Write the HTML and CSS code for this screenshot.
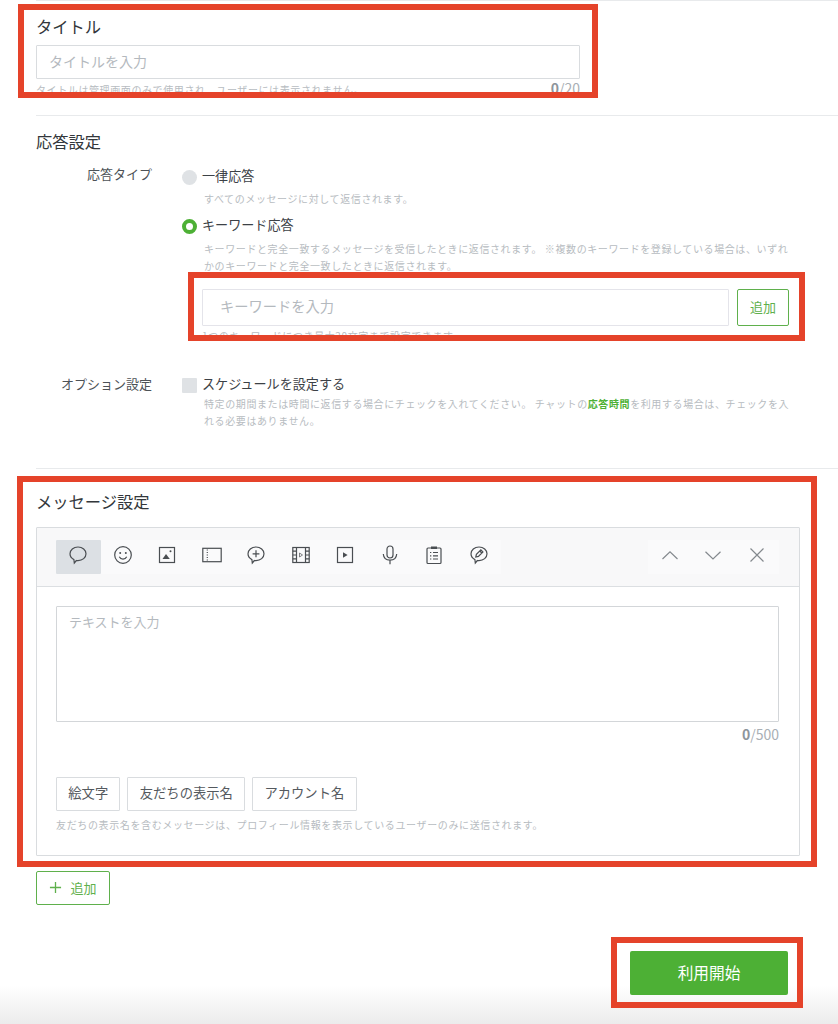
FILE: index.html
```html
<!DOCTYPE html>
<html lang="ja">
<head>
<meta charset="utf-8">
<title>応答設定</title>
<link rel="stylesheet" href="styles.css">
</head>
<body>
<div class="page">
  <section class="section section-title">
    <h2 class="heading">タイトル</h2>
    <div class="field title-field">タイトルを入力</div>
    <div class="meta-row title-meta">
      <span class="hint">タイトルは管理画面のみで使用され、ユーザーには表示されません。</span>
      <span class="count count-large"><b>0</b>/20</span>
    </div>
  </section>

  <section class="section section-response">
    <h2 class="heading">応答設定</h2>
    <div class="form-row type-row">
      <div class="form-label">応答タイプ</div>
      <div class="form-body">
        <div class="option"><span class="radio"></span>一律応答</div>
        <p class="hint option-hint first-hint">すべてのメッセージに対して返信されます。</p>
        <div class="option option-second"><span class="radio radio-on"></span>キーワード応答</div>
        <p class="hint option-hint second-hint">キーワードと完全一致するメッセージを受信したときに返信されます。 ※複数のキーワードを登録している場合は、いずれかのキーワードと完全一致したときに返信されます。</p>
        <div class="keyword-row">
          <div class="field keyword-field">キーワードを入力</div>
          <div class="btn-outline keyword-add">追加</div>
        </div>
        <p class="hint keyword-hint">1つのキーワードにつき最大20文字まで設定できます。</p>
      </div>
    </div>
    <div class="form-row schedule-row">
      <div class="form-label schedule-label">オプション設定</div>
      <div class="form-body">
        <div class="option"><span class="checkbox"></span>スケジュールを設定する</div>
        <p class="hint option-hint schedule-hint">特定の期間または時間に返信する場合にチェックを入れてください。 チャットの<span class="hint-link">応答時間</span>を利用する場合は、チェックを入れる必要はありません。</p>
      </div>
    </div>
  </section>

  <section class="section-message">
    <h2 class="heading">メッセージ設定</h2>
    <div class="editor">
      <div class="toolbar">
        <div class="tool-group">
          <div class="tool tool-active">
            <svg class="icon" viewBox="0 0 20 20"><path d="M10 2c4.500 0 8 3 8 6.800s-3.500 6.800-8 6.800c-.5 0-1.100 0-1.600-.1L6.300 18l-.4-3.400C3.600 13.400 2 11.300 2 8.800 2 5 5.500 2 10 2z"/></svg>
          </div>
          <div class="tool">
            <svg class="icon" viewBox="0 0 20 20"><circle cx="10" cy="10" r="8.300"/><circle class="fill" cx="7.200" cy="8" r="1"/><circle class="fill" cx="12.800" cy="8" r="1"/><path d="M6.300 11.800c.8 1.600 2.100 2.400 3.700 2.400s2.900-.8 3.700-2.400"/></svg>
          </div>
          <div class="tool">
            <svg class="icon" viewBox="0 0 20 20"><rect x="2.500" y="2.500" width="15" height="15"/><path class="fill" d="M5.500 14l3.500-5 3.800 5z"/><circle class="fill" cx="13.500" cy="6.300" r="1"/></svg>
          </div>
          <div class="tool">
            <svg class="icon" viewBox="0 0 20 20"><rect x=".8" y="3.300" width="18.400" height="13.400"/><path class="dots" d="M5.300 4.500v11"/></svg>
          </div>
          <div class="tool">
            <svg class="icon" viewBox="0 0 20 20"><path d="M10 2c4.500 0 8 3 8 6.800s-3.500 6.800-8 6.800c-.5 0-1.100 0-1.600-.1L6.300 18l-.4-3.400C3.600 13.400 2 11.300 2 8.800 2 5 5.500 2 10 2z"/><path d="M10 5.300v7M6.600 8.800h6.800"/></svg>
          </div>
          <div class="tool">
            <svg class="icon" viewBox="0 0 20 20"><rect x="1.800" y="2.500" width="16.400" height="15"/><path d="M5.500 2.500v15M14.500 2.500v15M1.800 6.200h3.700M1.800 10h3.700M1.800 13.800h3.700M14.500 6.200h3.700M14.500 10h3.700M14.500 13.800h3.700"/><path class="thin-line" d="M8.500 8l3 2-3 2z"/></svg>
          </div>
          <div class="tool">
            <svg class="icon" viewBox="0 0 20 20"><rect x="2.500" y="2.500" width="15" height="15"/><path class="fill" d="M8 7.200l4.600 2.800L8 12.800z"/></svg>
          </div>
          <div class="tool">
            <svg class="icon" viewBox="0 0 20 20"><rect x="7" y="1" width="6" height="12" rx="3"/><path d="M3.300 9c.3 3.900 3 6.200 6.700 6.200s6.400-2.300 6.700-6.200M10 15.200v4"/></svg>
          </div>
          <div class="tool">
            <svg class="icon" viewBox="0 0 20 20"><rect x="3" y="3" width="14" height="15.500" rx="1"/><rect class="fill" x="7" y="1.500" width="6" height="2.500"/><path d="M6 7.500h1.300M9 7.500h5M6 10.800h1.300M9 10.800h5M6 14h1.300M9 14h5"/></svg>
          </div>
          <div class="tool">
            <svg class="icon" viewBox="0 0 20 20"><path d="M10 2c4.500 0 8 3 8 6.800s-3.500 6.800-8 6.800c-.5 0-1.100 0-1.600-.1L6.300 18l-.4-3.400C3.600 13.400 2 11.300 2 8.800 2 5 5.500 2 10 2z"/><path d="M6.800 12l.6-2.600 4.500-4.500 2 2-4.500 4.500zM10.800 6l2 2"/></svg>
          </div>
        </div>
        <div class="tool-group">
          <div class="tool tool-small"><svg class="icon icon-thin" viewBox="0 0 20 20"><path d="M2.500 14L10 6.800l7.500 7.200"/></svg></div>
          <div class="tool tool-small"><svg class="icon icon-thin" viewBox="0 0 20 20"><path d="M2.500 6.800L10 14l7.500-7.200"/></svg></div>
          <div class="tool tool-small"><svg class="icon icon-thin" viewBox="0 0 20 20"><path d="M3.500 3.500l13 13M16.500 3.500l-13 13"/></svg></div>
        </div>
      </div>
      <div class="editor-body">
        <div class="textarea">テキストを入力</div>
        <div class="count count-editor"><b>0</b>/500</div>
        <div class="chips">
          <div class="chip">絵文字</div>
          <div class="chip">友だちの表示名</div>
          <div class="chip">アカウント名</div>
        </div>
        <p class="hint chips-hint">友だちの表示名を含むメッセージは、プロフィール情報を表示しているユーザーのみに送信されます。</p>
      </div>
    </div>
    <div class="btn-outline add-btn">
      <svg class="plus" viewBox="0 0 14 14"><path d="M7 1v12M1 7h12"/></svg>追加
    </div>
  </section>

  <div class="actions"><div class="btn-primary">利用開始</div></div>

  <div class="mark mark-title"></div>
  <div class="mark mark-keyword"></div>
  <div class="mark mark-message"></div>
  <div class="mark mark-start"></div>
</div>
</body>
</html>
```

FILE: styles.css
```css
* { box-sizing: border-box; }
html, body { margin: 0; padding: 0; }
body {
  font-family: "Noto Sans CJK JP", "Noto Sans", sans-serif;
  color: #3c4146;
}
.page {
  position: relative;
  width: 838px;
  height: 1024px;
  overflow: hidden;
  background: linear-gradient(#fff 0, #fff 985px, #ececec 1024px);
}
p { margin: 0; }
.section {
  margin-left: 36px;
  border-top: 1px solid #e8eaec;
}
.section-title { height: 115px; padding-top: 14px; }
.section-response { height: 353px; padding-top: 14px; }
.section-message {
  margin-left: 36px;
  padding-top: 21px;
  border-top: 1px solid #e8eaec;
}
.heading {
  margin: 0;
  font-size: 16.300px;
  line-height: 22px;
  font-weight: 400;
  color: #33373b;
}
.field {
  display: flex;
  align-items: center;
  background: #fff;
  border: 1px solid #d9dcdf;
  border-radius: 1px;
  color: #b4b9be;
  font-size: 14px;
}
.title-field {
  width: 544px;
  height: 34px;
  margin-top: 8px;
  padding: 0 0 3px 12px;
}
.meta-row {
  display: flex;
  justify-content: space-between;
  align-items: flex-start;
  width: 544px;
}
.title-meta { margin-top: 2px; }
.hint {
  font-size: 10px;
  line-height: 17px;
  letter-spacing: .6px;
  color: #b7bcc1;
}
.count { color: #a9afb5; font-size: 14px; }
.count b { color: #8e959c; font-weight: 700; }
.count-large { line-height: 20px; margin-top: -3px; }
.form-row { display: flex; }
.type-row { margin-top: 13px; }
.schedule-row { margin-top: 29px; }
.form-label {
  flex: none;
  width: 116px;
  margin-right: 30px;
  text-align: right;
  font-size: 13px;
  line-height: 18px;
  color: #4d5257;
}
.schedule-label { padding-top: 2px; }
.form-body { width: 606px; }
.option {
  display: flex;
  align-items: center;
  gap: 5px;
  height: 20px;
  font-size: 13.100px;
  color: #3c4146;
}
.option-second { margin-top: 7px; }
.radio {
  flex: none;
  width: 15px;
  height: 15px;
  margin-top: 4px;
  border-radius: 50%;
  background: #dfe2e5;
}
.radio-on {
  background: #fff;
  border: 4.500px solid #4db035;
}
.checkbox {
  flex: none;
  width: 15px;
  height: 15px;
  margin-top: 5px;
  border-radius: 1px;
  background: #dfe2e5;
}
.option-hint { margin-left: 22px; width: 592px; }
.first-hint { margin-top: 5px; }
.second-hint { margin-top: 6px; }
.schedule-hint { margin-top: 2px; }
.hint-link { color: #4db035; font-weight: 700; }
.keyword-row {
  display: flex;
  gap: 8px;
  margin-top: 15px;
  margin-left: 20px;
  width: 587px;
}
.keyword-field {
  flex: 1;
  height: 37px;
  padding: 0 0 4px 17px;
  font-size: 14.250px;
  border-color: #e4e4ea;
}
.btn-outline {
  display: flex;
  align-items: center;
  justify-content: center;
  background: #fff;
  border: 1px solid #5fb04c;
  border-radius: 2px;
  color: #5fb04c;
  font-size: 13px;
}
.keyword-add { width: 52px; height: 37px; padding-bottom: 3px; }
.keyword-hint { margin: 2px 0 0 20px; line-height: 16px; }
.editor {
  width: 764px;
  height: 329px;
  margin-top: 15px;
  border: 1px solid #d9dcdf;
  border-radius: 1px;
}
.toolbar {
  display: flex;
  justify-content: space-between;
  height: 59px;
  padding: 12px 20px 12px 19px;
  background: #f8f8f9;
  border-bottom: 1px solid #dcdfe2;
}
.tool-group { display: flex; background: #fafafb; }
.tool {
  display: flex;
  align-items: center;
  justify-content: center;
  width: 44.500px;
  height: 34px;
  padding-bottom: 4px;
}
.tool-small { width: 43.700px; }
.tool-active { background: #dce0e4; border-radius: 1px; }
.icon {
  width: 20px;
  height: 20px;
  fill: none;
  stroke: #4a4e52;
  stroke-width: 1.200;
}
.icon .fill { fill: #4a4e52; stroke: none; }
.icon .dots { stroke-dasharray: 1 1.500; }
.icon .thin-line { stroke-width: .7; }
.icon-thin { stroke: #84898e; stroke-width: 1.200; }
.editor-body { padding: 19px 20px 0 19px; }
.textarea {
  height: 116px;
  padding: 6px 12px;
  border: 1px solid #d3d6d9;
  border-radius: 1px;
  color: #b4b9be;
  font-size: 13px;
  line-height: 18px;
}
.count-editor {
  height: 20px;
  margin-top: 2px;
  text-align: right;
  line-height: 20px;
}
.chips { display: flex; gap: 7px; margin-top: 33px; }
.chip {
  display: flex;
  align-items: center;
  height: 34px;
  padding: 0 11.300px 3px;
  border: 1px solid #d9dcdf;
  border-radius: 1px;
  font-size: 13.300px;
  color: #54595e;
}
.chips-hint {
  margin-top: 6px;
  line-height: 16px;
  letter-spacing: .63px;
}
.add-btn {
  width: 74px;
  height: 34px;
  margin-top: 15px;
  padding-bottom: 2px;
  gap: 8px;
}
.plus {
  width: 13px;
  height: 13px;
  fill: none;
  stroke: #5fb04c;
  stroke-width: 1.400;
}
.actions {
  display: flex;
  justify-content: flex-end;
  margin-top: 46px;
  padding-right: 50px;
}
.btn-primary {
  display: flex;
  align-items: center;
  justify-content: center;
  width: 158px;
  height: 44px;
  padding-bottom: 2px;
  background: #4db035;
  border-radius: 2px;
  color: #fff;
  font-size: 15.700px;
}
.mark {
  position: absolute;
  border: 6px solid #e5432a;
  pointer-events: none;
}
.mark-title { left: 18px; top: 4px; width: 580px; height: 94px; }
.mark-keyword { left: 188px; top: 272px; width: 617px; height: 69px; }
.mark-message { left: 17px; top: 476px; width: 800px; height: 391px; }
.mark-start { left: 611px; top: 937px; width: 192px; height: 71px; }
```
